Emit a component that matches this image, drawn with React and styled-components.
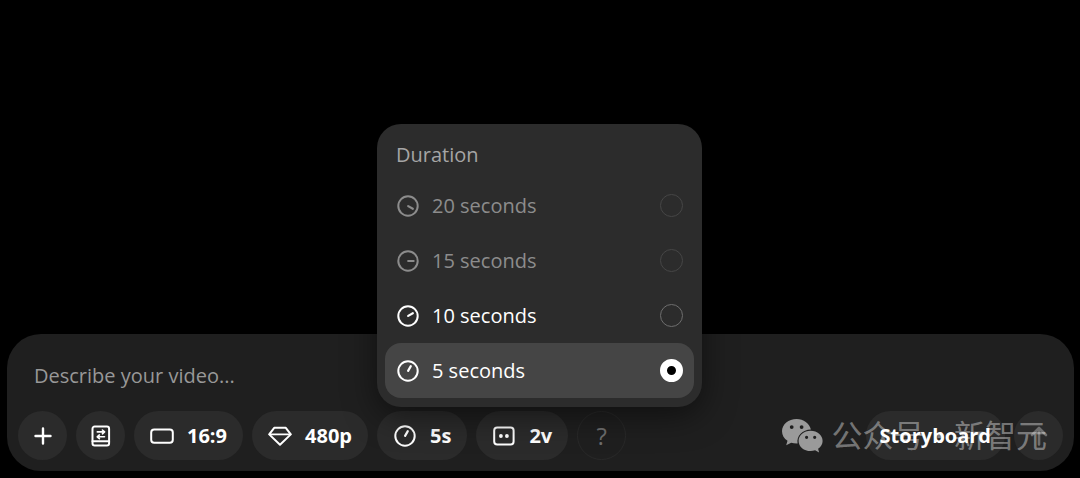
import { useState } from "react";
import styled, { createGlobalStyle } from "styled-components";

const durations = [
  { value: 20, angle: 120, locked: true },
  { value: 15, angle: 90, locked: true },
  { value: 10, angle: 60, locked: false },
  { value: 5, angle: 30, locked: false },
];

const Icon = ({ children }) => (
  <svg width="24" height="24" viewBox="0 0 24 24" fill="none" stroke="currentColor" strokeWidth="2" strokeLinecap="round" strokeLinejoin="round" aria-hidden="true">
    {children}
  </svg>
);

const TimerIcon = ({ angle }) => (
  <Icon>
    <circle cx="12" cy="12" r="9.7" />
    <path d="M12 11.8V6.4" transform={`rotate(${angle} 12 12)`} strokeWidth="2.2" />
  </Icon>
);

const PlusIcon = () => (
  <Icon>
    <path d="M12 4.5v15M4.5 12h15" strokeWidth="2.4" />
  </Icon>
);

const PresetIcon = () => (
  <Icon>
    <path d="M5.7 2.5h12.2a2.2 2.2 0 0 1 2.2 2.2v14.6a2.2 2.2 0 0 1-2.2 2.2H5.7a2.2 2.2 0 0 1-2.2-2.2V4.700a2.200 2.200 0 0 1 2.200-2.200z" />
    <path d="M3.500 17.300h16.600" />
    <path d="M8.300 7.900h7M13.400 6l2.200 1.900-2.200 1.900M15.500 12.800h-7M10.400 10.900l-2.200 1.900 2.200 1.900" strokeWidth="1.600" />
  </Icon>
);

const RatioIcon = () => (
  <Icon>
    <rect x="1.2" y="5.600" width="21.600" height="13.200" rx="3" />
  </Icon>
);

const DiamondIcon = () => (
  <Icon>
    <path d="M6.200 3.800h11.600L22.800 10.400 12 20.800 1.200 10.400z" />
    <path d="M1.600 10.400h20.800" strokeWidth="1.6" />
  </Icon>
);

const VariationsIcon = () => (
  <Icon>
    <rect x="2.200" y="3.400" width="19.400" height="17.200" rx="3" />
    <circle cx="8.900" cy="12" r="1.900" fill="currentColor" stroke="none" />
    <circle cx="14.900" cy="12" r="1.900" fill="currentColor" stroke="none" />
  </Icon>
);

const ArrowUpIcon = () => (
  <Icon>
    <path d="M12 20.500V4.500M5 11l7-7 7 7" strokeWidth="2.600" />
  </Icon>
);

const WechatIcon = () => (
  <svg width="41" height="34" viewBox="0 0 41 34" fill="currentColor" fillRule="evenodd" aria-hidden="true">
    <path d="M14.6 0C6.5 0 0 5.400 0 12.2c0 3.900 2.100 7.300 5.500 9.500L4.200 26.300l5-2.600c1.700.5 3.500.8 5.500.8h.9C14.200 17 20.500 10.400 28.900 10.400C27.400 4.400 21.600 0 14.600 0zM9.700 6.200a1.900 1.900 0 1 1 0 3.800a1.900 1.900 0 0 1 0-3.800zM19.600 6.200a1.900 1.900 0 1 1 0 3.800a1.900 1.900 0 0 1 0-3.800z" />
    <path d="M28.600 11.800c-6.700 0-12 4.500-12 10.100s5.300 10.100 12 10.100c1.600 0 3.100-.3 4.500-.7l4 2.100-1-3.700c2.900-1.900 4.500-4.700 4.500-7.800c0-5.600-5.300-10.100-12-10.100zM24.600 16.700a1.600 1.600 0 1 1 0 3.200a1.600 1.600 0 0 1 0-3.200zM32.700 16.700a1.600 1.600 0 1 1 0 3.200a1.600 1.600 0 0 1 0-3.200z" />
  </svg>
);

const DurationMenu = ({ duration, setDuration }) => (
  <Menu>
    <MenuTitle>Duration</MenuTitle>
    {durations.map((item) => (
      <Option key={item.value} $active={item.value === duration} $locked={item.locked}>
        <TimerIcon angle={item.angle} />
        <span>{item.value} seconds</span>
        <Radio
          type="radio"
          name="duration"
          checked={item.value === duration}
          disabled={item.locked}
          onChange={() => setDuration(item.value)}
        />
      </Option>
    ))}
  </Menu>
);

const App = () => {
  const [prompt, setPrompt] = useState("");
  const [duration, setDuration] = useState(5);
  const [open, setOpen] = useState(true);
  const current = durations.find((item) => item.value === duration);

  return (
    <>
      <GlobalStyle />
      <Page>
        <Composer onSubmit={(e) => e.preventDefault()}>
          <Prompt
            type="text"
            aria-label="Describe your video"
            placeholder="Describe your video..."
            value={prompt}
            onChange={(e) => setPrompt(e.target.value)}
          />
          <Toolbar>
            <RoundButton type="button" aria-label="Add"><PlusIcon /></RoundButton>
            <RoundButton type="button" aria-label="Presets"><PresetIcon /></RoundButton>
            <PillButton type="button"><RatioIcon />16:9</PillButton>
            <PillButton type="button"><DiamondIcon />480p</PillButton>
            <MenuAnchor>
              <PillButton type="button" aria-expanded={open} onClick={() => setOpen(!open)}>
                <TimerIcon angle={current.angle} />{duration}s
              </PillButton>
              {open && <DurationMenu duration={duration} setDuration={setDuration} />}
            </MenuAnchor>
            <PillButton type="button"><VariationsIcon />2v</PillButton>
            <HelpButton type="button" aria-label="Help">?</HelpButton>
            <Spacer />
            <StoryboardButton type="button">Storyboard</StoryboardButton>
            <SendButton type="submit" aria-label="Send"><ArrowUpIcon /></SendButton>
            <Watermark>
              <WechatIcon />
              <span>公众号 · 新智元</span>
            </Watermark>
          </Toolbar>
        </Composer>
      </Page>
    </>
  );
};

export default App;

const GlobalStyle = createGlobalStyle`
  * {
    box-sizing: border-box;
  }
  body {
    margin: 0;
    background: #000;
    color: #fff;
    font-family: "Open Sans", "Noto Sans", "Noto Sans CJK SC", sans-serif;
  }
  button, input {
    font-family: inherit;
  }
`

const Page = styled.main`
  display: flex;
  flex-direction: column;
  justify-content: flex-end;
  min-height: 100vh;
  padding: 7px 6px 7px 7px;
`

const Composer = styled.form`
  display: flex;
  flex-direction: column;
  gap: 16px;
  padding: 21px 11px 11px;
  border-radius: 34px;
  background: #1f1f1f;
`

const Prompt = styled.input`
  width: 100%;
  height: 40px;
  padding: 0 16px;
  border: none;
  outline: none;
  background: transparent;
  color: #fff;
  font-size: 20px;

  &::placeholder {
    color: #989898;
    opacity: 1;
  }
`

const Toolbar = styled.div`
  position: relative;
  display: flex;
  align-items: center;
  gap: 9px;
`

const PillButton = styled.button`
  display: flex;
  align-items: center;
  justify-content: center;
  gap: 13px;
  height: 49px;
  padding: 0 16px;
  border: none;
  border-radius: 25px;
  background: #2b2b2b;
  color: #fff;
  font-size: 20px;
  font-weight: 700;
  cursor: pointer;
`

const RoundButton = styled(PillButton)`
  width: 49px;
  padding: 0;
`

const HelpButton = styled(RoundButton)`
  border: 1px solid #292929;
  background: transparent;
  color: #6e6e6e;
  font-size: 24px;
  font-weight: 500;
`

const StoryboardButton = styled(PillButton)`
  padding: 0 14px;
`

const SendButton = styled(RoundButton)`
  color: #6e6e6e;
`

const Spacer = styled.div`
  flex: 1;
`

const MenuAnchor = styled.div`
  position: relative;
`

const Menu = styled.div`
  position: absolute;
  left: 0;
  bottom: calc(100% + 4px);
  z-index: 2;
  width: 325px;
  padding: 8px 8px 9px;
  border-radius: 24px;
  background: #2c2c2c;
  box-shadow: 0 8px 32px rgba(0, 0, 0, 0.5);
`

const MenuTitle = styled.div`
  padding: 0 11px;
  color: #a5a5a5;
  font-size: 20px;
  line-height: 46px;
`

const Option = styled.label`
  display: flex;
  align-items: center;
  gap: 12px;
  height: 55px;
  padding: 0 11px;
  border-radius: 16px;
  background: ${(props) => (props.$active ? "#454545" : "transparent")};
  color: ${(props) => (props.$locked ? "#8c8c8c" : "#fff")};
  font-size: 20px;
  cursor: pointer;
`

const Radio = styled.input`
  appearance: none;
  width: 23px;
  height: 23px;
  margin: 0 0 0 auto;
  border: 1px solid #6e6e6e;
  border-radius: 50%;

  &:disabled {
    border-color: #464646;
  }
  &:checked {
    border: 7px solid #fff;
    background: #000;
  }
`

const Watermark = styled.div`
  position: absolute;
  right: 16px;
  top: 50%;
  display: flex;
  align-items: center;
  gap: 8px;
  transform: translateY(-50%);
  color: rgba(255, 255, 255, 0.4);
  font-family: "DejaVu Sans", "Noto Sans CJK SC", sans-serif;
  font-size: 31px;
  line-height: 40px;
  white-space: nowrap;
  pointer-events: none;

  svg {
    color: rgba(255, 255, 255, 0.55);
  }
`
